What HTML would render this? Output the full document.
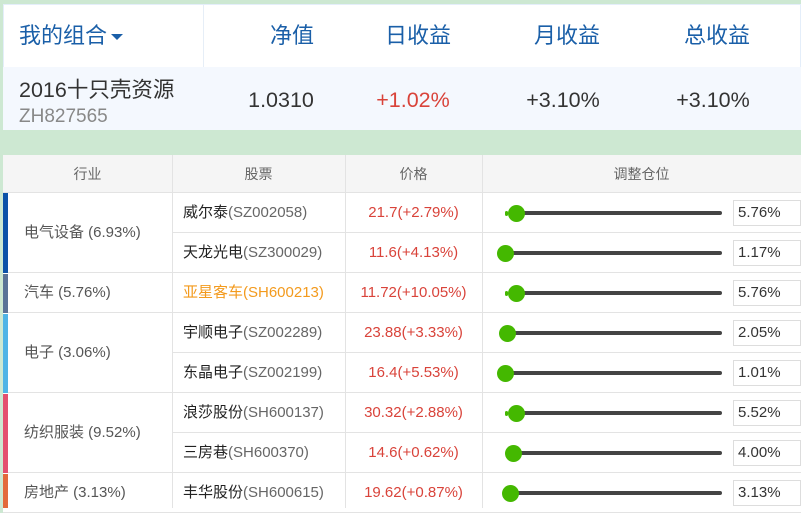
<!DOCTYPE html>
<html><head><meta charset="utf-8">
<style>
*{margin:0;padding:0;box-sizing:border-box}
body{width:801px;height:508px;overflow:hidden;background:#cde8d2;font-family:"Liberation Sans","Noto Sans CJK SC",sans-serif;position:relative}
.a{position:absolute;white-space:nowrap}
.c{text-align:center}
.hdr{font-size:22px;color:#1a5fa8;line-height:62px;top:5px}
.gray{color:#666}
.red{color:#d9433a}
.row{position:absolute;left:3px;width:798px;height:40px;background:#fff;border-bottom:1px solid #e3e3e3}
.cell{position:absolute;top:0;height:100%;font-size:14px;display:flex;align-items:center}
.vl{position:absolute;top:155px;width:1px;height:353px;background:#e3e3e3}
.track{position:absolute;height:4px;background:#444;border-radius:2px}
.knob{position:absolute;width:17px;height:17px;border-radius:50%;background:#44b800}
.dot{position:absolute;width:3px;height:5px;border-radius:2px;background:#44b800}
.inp{position:absolute;left:733px;width:68px;height:26px;border:1px solid #ddd;background:#fff;font-size:15px;color:#333;padding-left:4px;line-height:24px}
.t{position:absolute;white-space:nowrap;height:40px;line-height:40px;font-size:15px}
.ind{left:24px;color:#555}
.stk{left:183px;color:#222}
.stk span{color:#666}
.pr{left:345px;width:137px;text-align:center;color:#d9433a}
</style></head><body>
<div class="a" style="left:3px;top:4px;width:798px;height:63px;background:#fff;border:1px solid #e4eefa;border-bottom:none"></div>
<div class="a" style="left:203px;top:5px;width:1px;height:62px;background:#e6eef7"></div>
<div class="a" style="left:3px;top:67px;width:798px;height:63px;background:#f4f8fe"></div>
<div class="a hdr" style="left:19px">我的组合<span style="display:inline-block;width:0;height:0;border-left:6px solid transparent;border-right:6px solid transparent;border-top:6px solid #1a5fa8;margin-left:4px;vertical-align:middle"></span></div>
<div class="a hdr c" style="left:242px;width:100px">净值</div>
<div class="a hdr c" style="left:368px;width:100px">日收益</div>
<div class="a hdr c" style="left:517px;width:100px">月收益</div>
<div class="a hdr c" style="left:667px;width:100px">总收益</div>
<div class="a" style="left:19px;top:77px;font-size:21.5px;color:#333;line-height:26px">2016十只壳资源</div>
<div class="a" style="left:19px;top:106px;font-size:19px;color:#888;line-height:22px">ZH827565</div>
<div class="a c" style="left:231px;width:100px;top:87px;font-size:21.5px;color:#333;line-height:26px">1.0310</div>
<div class="a c red" style="left:363px;width:100px;top:87px;font-size:21.5px;line-height:26px">+1.02%</div>
<div class="a c" style="left:513px;width:100px;top:87px;font-size:21.5px;color:#333;line-height:26px">+3.10%</div>
<div class="a c" style="left:663px;width:100px;top:87px;font-size:21.5px;color:#333;line-height:26px">+3.10%</div>

<div class="row" style="top:155px;height:38px;background:#f5f5f5">
<div class="cell gray" style="left:0;width:169px;justify-content:center">行业</div>
<div class="cell gray" style="left:169px;width:173px;justify-content:center">股票</div>
<div class="cell gray" style="left:342px;width:137px;justify-content:center">价格</div>
<div class="cell gray" style="left:479px;width:319px;justify-content:center">调整仓位</div>
</div>

<div class="row" style="top:193px"></div>
<div class="row" style="top:233px"></div>
<div class="row" style="top:273px"></div>
<div class="row" style="top:313px"></div>
<div class="row" style="top:353px"></div>
<div class="row" style="top:393px"></div>
<div class="row" style="top:433px"></div>
<div class="row" style="top:473px"></div>
<div class="a" style="left:3px;top:193px;width:169px;height:79px;background:#fff"></div>
<div class="a" style="left:3px;top:313px;width:169px;height:79px;background:#fff"></div>
<div class="a" style="left:3px;top:393px;width:169px;height:79px;background:#fff"></div>
<div class="a" style="left:3px;top:193px;width:5px;height:80px;background:#0d52a8"></div>
<div class="a" style="left:3px;top:274px;width:5px;height:39px;background:#5a7398"></div>
<div class="a" style="left:3px;top:314px;width:5px;height:79px;background:#4fb4e6"></div>
<div class="a" style="left:3px;top:394px;width:5px;height:79px;background:#e4506f"></div>
<div class="a" style="left:3px;top:474px;width:5px;height:34px;background:#e36a3c"></div>
<div class="vl" style="left:172px"></div>
<div class="vl" style="left:345px"></div>
<div class="vl" style="left:482px"></div>

<div class="t ind" style="top:213px">电气设备 (6.93%)</div>
<div class="t ind" style="top:273px">汽车 (5.76%)</div>
<div class="t ind" style="top:333px">电子 (3.06%)</div>
<div class="t ind" style="top:413px">纺织服装 (9.52%)</div>
<div class="t ind" style="top:473px">房地产 (3.13%)</div>

<div class="t stk" style="top:193px">威尔泰<span>(SZ002058)</span></div>
<div class="t stk" style="top:233px">天龙光电<span>(SZ300029)</span></div>
<div class="t stk" style="top:273px;color:#f39a1d">亚星客车(SH600213)</div>
<div class="t stk" style="top:313px">宇顺电子<span>(SZ002289)</span></div>
<div class="t stk" style="top:353px">东晶电子<span>(SZ002199)</span></div>
<div class="t stk" style="top:393px">浪莎股份<span>(SH600137)</span></div>
<div class="t stk" style="top:433px">三房巷<span>(SH600370)</span></div>
<div class="t stk" style="top:473px">丰华股份<span>(SH600615)</span></div>

<div class="t pr" style="top:193px">21.7(+2.79%)</div>
<div class="t pr" style="top:233px">11.6(+4.13%)</div>
<div class="t pr" style="top:273px">11.72(+10.05%)</div>
<div class="t pr" style="top:313px">23.88(+3.33%)</div>
<div class="t pr" style="top:353px">16.4(+5.53%)</div>
<div class="t pr" style="top:393px">30.32(+2.88%)</div>
<div class="t pr" style="top:433px">14.6(+0.62%)</div>
<div class="t pr" style="top:473px">19.62(+0.87%)</div>

<div class="dot" style="left:505px;top:211px"></div><div class="track" style="left:516px;top:211px;width:206px"></div><div class="knob" style="left:508px;top:205px"></div>
<div class="track" style="left:505px;top:251px;width:217px"></div><div class="knob" style="left:497px;top:245px"></div>
<div class="dot" style="left:505px;top:291px"></div><div class="track" style="left:516px;top:291px;width:206px"></div><div class="knob" style="left:508px;top:285px"></div>
<div class="track" style="left:508px;top:331px;width:214px"></div><div class="knob" style="left:499px;top:325px"></div>
<div class="track" style="left:505px;top:371px;width:217px"></div><div class="knob" style="left:497px;top:365px"></div>
<div class="dot" style="left:505px;top:411px"></div><div class="track" style="left:516px;top:411px;width:206px"></div><div class="knob" style="left:508px;top:405px"></div>
<div class="track" style="left:513px;top:451px;width:209px"></div><div class="knob" style="left:505px;top:445px"></div>
<div class="track" style="left:510px;top:491px;width:212px"></div><div class="knob" style="left:502px;top:485px"></div>

<div class="inp" style="top:200px">5.76%</div>
<div class="inp" style="top:240px">1.17%</div>
<div class="inp" style="top:280px">5.76%</div>
<div class="inp" style="top:320px">2.05%</div>
<div class="inp" style="top:360px">1.01%</div>
<div class="inp" style="top:400px">5.52%</div>
<div class="inp" style="top:440px">4.00%</div>
<div class="inp" style="top:480px">3.13%</div>
</body></html>
